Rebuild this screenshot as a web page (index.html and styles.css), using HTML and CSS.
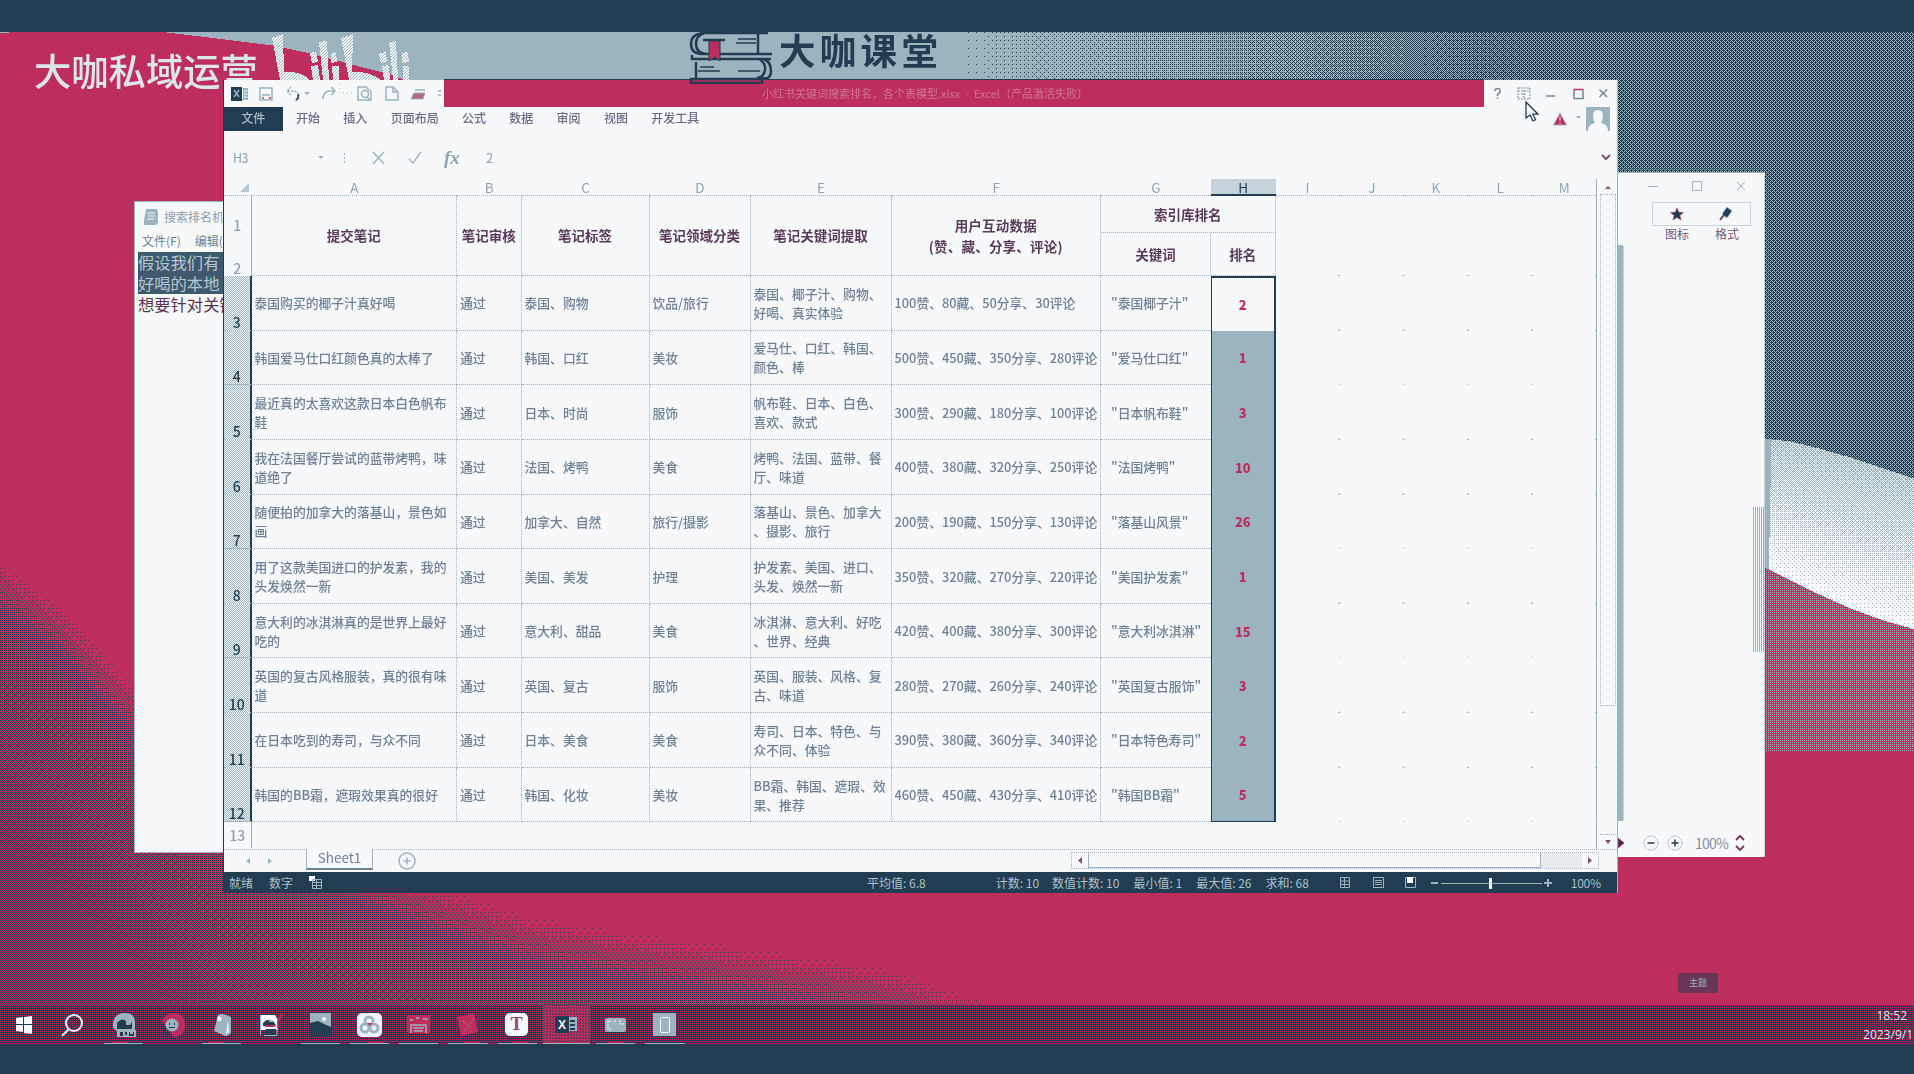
FILE: index.html
```html
<!DOCTYPE html>
<html lang="zh-CN">
<head>
<meta charset="utf-8">
<title>大咖课堂</title>
<link rel="stylesheet" href="styles.css">
</head>
<body>
<div class="desktop">
<canvas class="wallpaper" id="wallpaper" width="1914" height="1074"></canvas>
<svg class="wallpaper" width="1914" height="90" shape-rendering="crispEdges">
  <defs>
    <pattern id="logo-dot" width="3" height="3" patternUnits="userSpaceOnUse"><path class="w" d="M0 0h3v3H0z"/><path class="s" d="M0 0h1v1H0zM2 1h1v1H2zM1 2h1v1H1z"/></pattern>
  </defs>
  <path class="n" d="M0 0H1914V32H0z"/>
  <g fill="url(#logo-dot)">
    <path d="M272 38L283 34L284 72Q301 71 310 80H280z"/>
    <path d="M310 53L316 51L318 62L312 63zM311 66L318 65L320 80H313zM319 42L327 41L329 80H323zM331 53L336 52L337 62L331 63zM332 66H339V80H333z"/>
    <path d="M341 38L353 34L352 72Q370 71 381 80H349z"/>
    <path d="M379 53L386 52L387 62L381 63zM382 66L389 65L390 80H384zM389 42L396 41L398 80H393zM402 53L408 52L409 62L402 63zM403 66H409V80H403z"/>
  </g>
</svg>
<div class="watermark">大咖私域运营</div>

<section class="notepad">
  <div class="np-title"><svg width="16" height="18"><path fill="#9cb3c0" d="M3 1h11l1 3v11l-2 2H1V13z"/><path stroke="#f6f8fa" d="M5 5h7M5 8h7M4 11h7" fill="none"/></svg><span>搜索排名机</span></div>
  <div class="np-menu"><span>文件(F)</span><span>编辑(</span></div>
  <div class="np-text"><p class="sel">假设我们有</p><p class="sel">好喝的本地</p><p>想要针对关键</p></div>
</section>

<section class="side">
  <div class="side-controls"><svg width="146" height="86" fill="none" stroke="#9cb3c0">
    <path d="M30 13.500h10M74.500 8.500h9v9h-9zM119 9l8 8M127 9l-8 8"/>
    <path stroke-dasharray="1 1" d="M34.500 29.500h98v23h-98z"/>
    <path fill="#223c51" stroke="#bd2d5e" stroke-width=".5" d="M59 35l1.800 4.200 4.700.3-3.600 3 1.200 4.500-4.100-2.500-4.100 2.500 1.200-4.500-3.600-3 4.700-.3z"/>
    <path fill="#223c51" d="M109 34l5 4-5 7-5-4z"/><path stroke="#5f3553" stroke-width="2" d="M106 42l-4 5"/></svg></div>
  <div class="side-labels"><span>图标</span><span>格式</span></div>
  <i class="side-edge"></i><i class="side-thumb"></i>
  <div class="side-zoom"><svg width="66" height="26" fill="none"><path fill="#223c51" stroke="#bd2d5e" d="M0 8l6 5-6 5z"/><g stroke="#9cb3c0" stroke-dasharray="2 1"><circle cx="33" cy="13" r="7"/><circle cx="57" cy="13" r="7"/></g><path stroke="#223c51" stroke-width="1.500" d="M29.500 13h7M53.500 13h7M57 9.500v7"/></svg><span>100%</span><svg width="10" height="18" fill="none" stroke="#7b3155" stroke-width="1.800"><path d="M1 6l4-4 4 4M1 12l4 4 4-4"/></svg></div>
</section>

<section class="excel">
  <header class="titlebar">
    <svg class="quick" width="220" height="27" fill="none" stroke="#9cb3c0" stroke-width="1.500">
      <path fill="#9cb3c0" stroke="none" d="M15 8h9v12h-9z"/><path fill="#223c51" stroke="none" d="M7 7h11v14H7z"/><path stroke="#f6f8fa" stroke-width="1" d="M18.500 9v10M20 11h3M20 14h3M20 17h3"/><path d="M10 10l5 7M15 10l-5 7"/>
      <path d="M36 8h12v12H36zM38 15h8"/><path stroke="#bd2d5e" d="M38 18h2M45 18h2"/>
      <path stroke-dasharray="2 1" d="M64 11h4q7 0 7 5t-5 5M67 7l-4 4 4 4"/><path stroke="#223c51" d="M74 14v4l-2 2"/><path fill="#9cb3c0" stroke="none" d="M80 12h6l-3 3z"/>
      <path d="M110 11h-5q-6 1-6 8M107 7l4 4-4 4"/><path stroke-dasharray="1 3" stroke-width="1" d="M116 4v9h12"/>
      <path d="M134 7h8l5 5v8h-13z"/><circle cx="141" cy="14" r="3.500"/><path d="M143 17l4 4"/>
      <path d="M162 7h7l5 5v8h-12zM169 7v5h5"/>
      <path fill="#b46a85" stroke="#9cb3c0" stroke-width="1" d="M190 13h11l-2 6h-12z"/><path d="M191 10h10M214 11h3M214 15h3"/>
    </svg>
    <div class="doc-title">小红书关键词搜索排名，各个表模型.xlsx&nbsp; - &nbsp;Excel（产品激活失败）</div>
    <svg class="win-buttons" width="133" height="27" fill="none" stroke="#738899" stroke-width="1.500"><path d="M11 11q0-2.500 2.500-2.500t2.500 2.500-2.500 3.500v1.500M13.500 17.500v1.500M62 16h9M90 10v8.500h9V10M115.500 9.500l7.500 7.500M123 9.500l-7.500 7.500"/><path stroke="#bd2d5e" d="M89.500 9.500h10"/><path stroke="#9cb3c0" stroke-dasharray="2 1" d="M34 8h12v11H34zM34 11h12M40 10v8M37 14h6"/></svg>
  </header>
  <nav class="ribbon"><span class="file">文件</span><span>开始</span><span>插入</span><span>页面布局</span><span>公式</span><span>数据</span><span>审阅</span><span>视图</span><span>开发工具</span>
    <svg class="account" width="79" height="25"><path fill="#bd2d5e" stroke="#9cb3c0" d="M22 6l6.500 12h-13z"/><path stroke="#f6f8fa" d="M22 9v5M22 15.500v1.500"/><path fill="#9cb3c0" d="M38 9h5l-2.500 3zM48 0h24v24H48z"/><path fill="#f6f8fa" d="M50 24q0-7 7-8-2-3-2-7 0-6 5-6t5 6q0 4-2 7 7 1 7 8z"/></svg>
  </nav>
  <div class="formula"><span class="name">H3</span><svg width="190" height="30" fill="none" stroke="#9cb3c0" stroke-width="1.300"><g transform="translate(58)"><path fill="#9cb3c0" stroke="none" d="M10 13h6l-3 3zM36 10h1v2h-1zM36 14h1v2h-1zM36 18h1v2h-1z"/><path d="M65 9l11 12M76 9L65 21M101 16l4 4 8-11"/></g></svg><em>fx</em><span class="value">2</span><svg class="expand" width="12" height="10"><path fill="none" stroke="#80516f" stroke-width="2" d="M2 2l4 4 4-4"/></svg></div>

  <div class="sheet">
    <div class="grid">
      <div class="corner"><svg width="9" height="9"><path fill="#9cb3c0" opacity=".7" d="M9 0v9H0z"/></svg></div>
      <b>A</b><b>B</b><b>C</b><b>D</b><b>E</b><b>F</b><b>G</b><b class="on">H</b><b>I</b><b>J</b><b>K</b><b>L</b><b>M</b>
      <div class="num r1">1</div><div class="num r2">2</div>
      <div class="head cA">提交笔记</div><div class="head cB">笔记审核</div><div class="head cC">笔记标签</div><div class="head cD">笔记领域分类</div><div class="head cE">笔记关键词提取</div><div class="head cF">用户互动数据<br>(赞、藏、分享、评论)</div><div class="head rank">索引库排名</div><div class="head word">关键词</div><div class="head pos">排名</div><div class="blank top"></div>

      <div class="num on">3</div><div>泰国购买的椰子汁真好喝</div><div>通过</div><div>泰国、购物</div><div>饮品/旅行</div><div>泰国、椰子汁、购物、<br>好喝、真实体验</div><div>100赞、80藏、50分享、30评论</div><div class="key">"泰国椰子汁"</div><div class="score first">2</div><div class="blank"></div>
      <div class="num on">4</div><div>韩国爱马仕口红颜色真的太棒了</div><div>通过</div><div>韩国、口红</div><div>美妆</div><div>爱马仕、口红、韩国、<br>颜色、棒</div><div>500赞、450藏、350分享、280评论</div><div class="key">"爱马仕口红"</div><div class="score">1</div><div class="blank"></div>
      <div class="num on">5</div><div>最近真的太喜欢这款日本白色帆布<br>鞋</div><div>通过</div><div>日本、时尚</div><div>服饰</div><div>帆布鞋、日本、白色、<br>喜欢、款式</div><div>300赞、290藏、180分享、100评论</div><div class="key">"日本帆布鞋"</div><div class="score">3</div><div class="blank"></div>
      <div class="num on">6</div><div>我在法国餐厅尝试的蓝带烤鸭，味<br>道绝了</div><div>通过</div><div>法国、烤鸭</div><div>美食</div><div>烤鸭、法国、蓝带、餐<br>厅、味道</div><div>400赞、380藏、320分享、250评论</div><div class="key">"法国烤鸭"</div><div class="score">10</div><div class="blank"></div>
      <div class="num on">7</div><div>随便拍的加拿大的落基山，景色如<br>画</div><div>通过</div><div>加拿大、自然</div><div>旅行/摄影</div><div>落基山、景色、加拿大<br>、摄影、旅行</div><div>200赞、190藏、150分享、130评论</div><div class="key">"落基山风景"</div><div class="score">26</div><div class="blank"></div>
      <div class="num on">8</div><div>用了这款美国进口的护发素，我的<br>头发焕然一新</div><div>通过</div><div>美国、美发</div><div>护理</div><div>护发素、美国、进口、<br>头发、焕然一新</div><div>350赞、320藏、270分享、220评论</div><div class="key">"美国护发素"</div><div class="score">1</div><div class="blank"></div>
      <div class="num on">9</div><div>意大利的冰淇淋真的是世界上最好<br>吃的</div><div>通过</div><div>意大利、甜品</div><div>美食</div><div>冰淇淋、意大利、好吃<br>、世界、经典</div><div>420赞、400藏、380分享、300评论</div><div class="key">"意大利冰淇淋"</div><div class="score">15</div><div class="blank"></div>
      <div class="num on">10</div><div>英国的复古风格服装，真的很有味<br>道</div><div>通过</div><div>英国、复古</div><div>服饰</div><div>英国、服装、风格、复<br>古、味道</div><div>280赞、270藏、260分享、240评论</div><div class="key">"英国复古服饰"</div><div class="score">3</div><div class="blank"></div>
      <div class="num on">11</div><div>在日本吃到的寿司，与众不同</div><div>通过</div><div>日本、美食</div><div>美食</div><div>寿司、日本、特色、与<br>众不同、体验</div><div>390赞、380藏、360分享、340评论</div><div class="key">"日本特色寿司"</div><div class="score">2</div><div class="blank"></div>
      <div class="num on">12</div><div>韩国的BB霜，遮瑕效果真的很好</div><div>通过</div><div>韩国、化妆</div><div>美妆</div><div>BB霜、韩国、遮瑕、效<br>果、推荐</div><div>460赞、450藏、430分享、410评论</div><div class="key">"韩国BB霜"</div><div class="score last">5</div><div class="blank"></div>
      <div class="num n13">13</div><div class="tail"></div>
    </div>
    <div class="vscroll"><svg width="16" height="15"><path fill="#80516f" d="M5 10l3-3 3 3z"/></svg><i></i><svg width="16" height="15"><path fill="#80516f" d="M5 5h6l-3 4z"/></svg></div>
  </div>

  <div class="tabs">
    <svg width="82" height="23" fill="#9cb3c0"><path d="M26 8v6l-4-3zM44 8v6l4-3z"/></svg>
    <span class="tab">Sheet1</span>
    <svg class="add" width="20" height="20" fill="none" stroke="#9cb3c0" stroke-width="1.500"><circle cx="10" cy="10" r="8"/><path d="M6.500 10h7M10 6.500v7"/></svg>
    <div class="hscroll"><svg width="16" height="15"><path fill="#80516f" d="M10 4v7L6 7.500z"/></svg><i></i><u></u><svg width="16" height="15"><path fill="#80516f" d="M6 4v7l4-3.500z"/></svg></div>
  </div>
  <footer class="status">
    <span>就绪</span><span>数字</span><svg width="14" height="14"><path fill="#f6f8fa" d="M0 0h6v5H0z"/><path fill="none" stroke="#9cb3c0" d="M3.500 3.500h9v9h-9zM4 6.500h8M4 9.500h8M7.500 4v8"/></svg>
    <div class="stats"><span>平均值: 6.8</span><span>计数: 10</span><span>数值计数: 10</span><span>最小值: 1</span><span>最大值: 26</span><span>求和: 68</span></div>
    <svg class="views" width="216" height="20" fill="none" stroke="#9cb3c0"><path d="M1.500 4.500h9v10h-9zM1 8h10M1 11.500h10M5.500 4v10M34.500 4.500h10v10h-10zM36 7.500h7M36 9.500h7M36 11.500h7M66.500 4.500h10v10h-10z"/><path fill="#f6f8fa" stroke="none" d="M68 4h6v6h-6z"/><path stroke-width="2" d="M92 10h7M205 10h8M209 6v8"/><path d="M102 10.500h101"/><path stroke="#f6f8fa" stroke-width="3" d="M151.500 5v11"/></svg>
    <span class="pct">100%</span>
  </footer>
</section>

<div class="brand">
  <svg width="86" height="52" fill="none" stroke="#223c51" stroke-width="2.500">
    <path d="M78 1H15Q3 2 3 12T15 22H84M70 1v20M80 1H17Q8 3 8 12T18 22M4 27H76Q83 30 83 39T74 46M83 27H4V23M71 27Q78 31 77 38T69 46M8 30V46M3 47H74V51H3z"/>
    <path stroke-width="1.500" d="M50 7h18M48 11h20M12 35h14M10 39h22M50 39h22"/><path d="M15 8h22"/><path fill="#bd2d5e" stroke-width="1" d="M21 9h11v20l-5-4-6 4z"/>
  </svg><span>大咖课堂</span>
</div>
<svg class="cursor" width="16" height="22"><path fill="#f6f8fa" stroke="#223c51" stroke-width="1.300" d="M1 1v16l4-3 3 6 2.500-1.200-2.700-5.600H13z"/></svg>
<div class="toast">主题</div>

<div class="taskbar">
  <svg class="apps" width="720" height="39">
    <rect x="543" width="47" height="39" fill="url(#activebg)"/>
    <defs><pattern id="activebg" width="3" height="3" patternUnits="userSpaceOnUse" shape-rendering="crispEdges"><path class="c" d="M0 0h3v3H0z"/><path class="n" d="M0 0h1v1H0zM1 2h1v1H1z"/></pattern></defs>
    <path class="w" d="M16 13l7-1v7h-7zM24 12l8-1v8h-8zM16 20h7v7l-7-1zM24 20h8v9l-8-1z"/>
    <g fill="none" stroke="#f6f8fa" stroke-width="2"><circle cx="74" cy="18" r="8"/><path d="M69 24l-7 7"/></g>
    <path class="s" d="M113 23q-1-15 12-15 11 0 10 12v7h-17z"/><path class="n" d="M117 18q5-6 9-2v4h4l2-3v7h-15z"/><path class="s" d="M117 25h19v7h-19z"/><path class="n" d="M120 27h3v4h-3zM125 27h2v3h-2zM129 27h1v2h3v-2h1v4h-5z"/>
    <path class="c" d="M162 16q4-8 12-8 11 1 11 12t-11 12z"/><path class="n" d="M162 19l7 13-5-3z"/><circle class="s" cx="172" cy="20" r="6.500"/><path class="n" d="M169 18h1v2h-1zM174 18h1v2h-1zM169 22h6v1h-6z"/>
    <path class="s" d="M218 10q4-3 13 2v16q-2 3-6 3l-11-5z"/><path class="w" d="M218 11l4 2-2 4-3-2zM228 15l1 12-3 2z"/><path fill="none" stroke="#bd2d5e" d="M211 25l6 6"/>
    <path class="w" d="M260 10h15l3 5v10h-18z"/><path class="n" d="M263 18q5-6 11-1l2 4h-13zM266 24h10v5h-10z"/><path fill="none" stroke="#9cb3c0" d="M260.500 10v20M264 30.500h13V24"/><path fill="none" stroke="#bd2d5e" stroke-width="2" d="M282 9l-4 7v7M265 21h10"/><path class="s" d="M269 15h4v2h-4z"/>
    <path class="s" d="M310 8h21v22h-21z"/><path class="n" d="M310 18l8-2 6 3 7 3v10h-21z"/><circle class="w" cx="324" cy="14" r="2"/>
    <rect class="w" x="357" y="8" width="25" height="24" rx="5"/><g fill="none" stroke="#9cb3c0" stroke-width="3"><circle cx="369" cy="16" r="4"/><circle cx="365" cy="23" r="4"/><circle cx="374" cy="23" r="4"/></g><path class="c" d="M367 18h5l-2 3z"/>
    <path class="c" d="M407 10h23v18h-23z"/><path fill="none" stroke="#9cb3c0" stroke-width="1.500" d="M411 28v-8h15v8M413 23h11M414 26h9M410 15h3M416 13h3M423 14h5"/>
    <path class="c" d="M457 12l17-4 4 19-17 4z"/><path fill="none" stroke="#9cb3c0" stroke-dasharray="1 2" d="M474 13l-10 14M463 16l9 8"/>
    <rect class="w" x="505" y="8" width="23" height="23" rx="5"/><text class="tee" x="516.500" y="25" text-anchor="middle">T</text>
    <path class="s" d="M568 12h9v14h-9z"/><path class="n" d="M555 11h14v17h-14zM570 15h5v2h-5zM570 19h5v2h-5zM570 23h5v2h-5z"/><text class="ex" x="562" y="24" text-anchor="middle">X</text>
    <rect class="s" x="605" y="13" width="21" height="14" rx="2"/><path fill="none" stroke="#f6f8fa" d="M611 16h-3v8h3M614 16h2M620 15v4h4" stroke-dasharray="2 1"/>
    <path class="s" d="M653 8h23v23h-23z"/><rect x="660.500" y="12.500" width="9" height="15" rx="1" fill="none" stroke="#f6f8fa"/>
    <path stroke="#9cb3c0" d="M104 38.500h39M202 38.500h39M301 38.500h39M350 38.500h39M399 38.500h39M448 38.500h40M498 38.500h39M543 38.500h47M596 38.500h39M645 38.500h40"/>
    <path stroke="#bd2d5e" d="M112 37.500h16M208 37.500h16M368 37.500h16M464 37.500h16M512 37.500h16M608 37.500h16"/>
  </svg>
  <div class="clock"><span>18:52</span><span>2023/9/1</span></div>
</div>
<div class="bottom"></div>
</div>
<script src="wallpaper.js"></script>
</body>
</html>
```
FILE: styles.css
```css
:root { --navy: #223c51; --rose: #bd2d5e; --steel: #9cb3c0; --paper: #f6f8fa; --ink: #6f8195; --bold: #593b59; }
* { box-sizing: border-box; }
body { margin: 0; font-family: "Noto Sans CJK SC", sans-serif; color: var(--ink); }
p { margin: 0; }
.n { fill: var(--navy); }
.s { fill: var(--steel); }
.w { fill: var(--paper); }
.c { fill: var(--rose); }
.desktop { position: relative; width: 1914px; height: 1074px; overflow: hidden; background: var(--rose); white-space: nowrap; }
.wallpaper { position: absolute; left: 0; top: 0; }
.watermark { position: absolute; left: 34px; top: 44px; font-size: 37.300px; line-height: 52px; font-weight: 500; color: #dce5ea; }

/* note window behind the workbook */
.notepad { position: absolute; left: 134px; top: 201px; width: 92px; height: 652px; overflow: hidden; background: var(--paper); border: 1px solid var(--steel); padding: 6px 0 0 3px; font-size: 12px; }
.np-title { display: flex; gap: 5px; padding-left: 5px; line-height: 18px; color: #8ba0b0; }
.np-title svg { flex: none; }
.np-menu { display: flex; gap: 14px; padding: 5px 0 0 4px; line-height: 20px; }
.np-text { padding-top: 1px; font-size: 16.300px; color: #573453; }
.np-text p { height: 21px; line-height: 20px; }
.np-text .sel { background: #3f596d; color: #b5c7d1; }

/* document window to the right */
.side { position: absolute; left: 1618px; top: 172px; width: 147px; height: 685px; background: var(--paper); border-top: 1px solid var(--steel); border-right: 1px dotted var(--steel); overflow: hidden; }
.side-controls { height: 52px; }
.side-controls svg { display: block; }
.side-labels { position: relative; display: flex; gap: 26px; padding-left: 47px; font-size: 12px; line-height: 18px; color: #745b76; }
.side-edge { position: absolute; left: 0; top: 72px; width: 6px; height: 576px; background: var(--steel); border-right: 1px dotted var(--paper); }
.side-thumb { position: absolute; right: 0; top: 334px; width: 11px; height: 145px; background: repeating-linear-gradient(90deg, var(--steel) 0 1px, var(--paper) 1px 2px); }
.side-zoom { position: absolute; left: 0; right: 0; bottom: 0; height: 28px; display: flex; align-items: center; font-size: 14px; letter-spacing: -.8px; color: #8a8fa3; }
.side-zoom span { margin: 0 7px 0 11px; }

/* workbook */
.excel { position: absolute; left: 223px; top: 80px; width: 1395px; height: 813px; display: flex; flex-direction: column; background: var(--paper); border-left: 1px solid var(--navy); border-right: 1px solid var(--steel); }
.titlebar { display: flex; height: 27px; flex: none; }
.titlebar svg { flex: none; }
.doc-title { flex: 1; background: var(--rose); text-align: center; font-size: 11px; line-height: 26px; color: #cf7593; box-shadow: 0 -1px var(--navy); padding-right: 78px; }
.ribbon { display: flex; height: 25px; flex: none; gap: 23.300px; font-size: 12px; line-height: 21px; color: #6b6c85; font-weight: 500; }
.file { width: 58.500px; height: 24px; margin-right: -9.800px; background: var(--navy); color: #a9bdc9; text-align: center; }
.account { margin-left: auto; }
.formula { display: flex; align-items: center; height: 47px; flex: none; padding: 4px 5px 0 9px; font-size: 14px; color: #8fa4b2; }
.formula .name { width: 17px; font-size: 12.500px; letter-spacing: -.5px; }
.formula em { font: italic bold 19px "Liberation Serif", serif; margin-left: 4px; width: 42px; }
.formula .value { font-size: 13px; }
.expand { margin-left: auto; }
.sheet { display: flex; height: 670px; flex: none; }
.grid { display: grid; width: 1373px; overflow: hidden; border-right: 1px solid var(--steel); grid-template-columns: 27.500px 205.500px 64.500px 128px 101px 141px 209.500px 110px 64.500px repeat(5, 64.200px); grid-template-rows: 17px 37px 43px repeat(10, 54.650px) 26px; font-size: 12.800px; line-height: 19px; font-weight: 500; }
.grid > div { border-right: 1px dotted var(--steel); border-bottom: 1px dotted var(--steel); padding: 0 3px; display: flex; align-items: center; }
.grid > b { font-size: 13.500px; font-weight: 400; line-height: 16px; text-align: center; border-bottom: 1px dotted var(--steel); color: #8fa4b2; }
.grid > b.on { background: #c6d3db; color: var(--navy); border-bottom: 2px solid var(--navy); }
.grid > .corner { border-right: 0; justify-content: flex-end; }
.grid > .num { font-size: 14px; line-height: 16px; padding: 0; justify-content: center; align-items: flex-end; border-right: 1px solid var(--steel); color: #8fa4b2; }
.grid > .r1, .grid > .r2 { border-bottom: 0; grid-column: 1; }
.grid > .r1 { grid-row: 2; }
.grid > .r2 { grid-row: 3; }
.grid > .num.on { background: repeating-conic-gradient(var(--steel) 0 25%, var(--paper) 0 50%) 0 0 / 2px 2px; border-right: 2px solid var(--navy); color: var(--navy); }
.grid > .n13 { border-bottom: 0; padding-bottom: 5px; }
.grid > .head { font-size: 13.500px; line-height: 21px; font-weight: 700; color: var(--bold); justify-content: center; text-align: center; padding: 0; }
.cA, .cB, .cC, .cD, .cE, .cF { grid-row: 2 / 4; }
.cA { grid-column: 2; } .cB { grid-column: 3; } .cC { grid-column: 4; } .cD { grid-column: 5; } .cE { grid-column: 6; } .cF { grid-column: 7; letter-spacing: .2px; }
.rank { grid-row: 2; grid-column: 8 / 10; }
.word { grid-row: 3; grid-column: 8; }
.pos { grid-row: 3; grid-column: 9; }
.grid > .key { padding-left: 10px; border-right: 0; }
.grid > .score { justify-content: center; background: var(--steel); color: var(--rose); font-weight: 900; border-left: 1px solid var(--navy); border-right: 2px solid var(--navy); border-bottom: 0; }
.grid > .score.first { background: var(--paper); border-top: 2px solid var(--navy); }
.grid > .score.last { border-bottom: 1px solid var(--navy); }
/* empty cells show only the grid crossings */
.grid > .blank { grid-column: 10 / 15; border: 0; background: radial-gradient(circle at 63.500px 54px, var(--steel) .8px, transparent 1px) 0 0 / 64.200px 54.650px; }
.grid > .blank.top { grid-row: 2 / 4; background: radial-gradient(circle at 63.500px 79.500px, var(--steel) .8px, transparent 1px) 0 0 / 64.200px 80px; }
.grid > .tail { grid-column: 2 / 15; border: 0; }
.vscroll { display: flex; flex-direction: column; width: 19px; padding-left: 3px; }
.vscroll i { height: 512px; width: 16px; border: 1px dotted var(--steel); }
.vscroll svg:last-child { margin-top: auto; border-top: 1px dotted var(--steel); }
.tabs { display: flex; height: 23px; flex: none; border-top: 1px dotted var(--steel); }
.tab { width: 67px; height: 21px; margin-top: -1px; background: var(--paper); border: 1px solid var(--steel); border-top: 0; border-bottom: 2px solid #6c8191; text-align: center; font-size: 13.500px; line-height: 16px; }
.add { margin: 1px 0 0 24px; }
.hscroll { display: flex; height: 17px; margin: 2px 18px 0 auto; border: 1px dotted var(--steel); }
.hscroll i { width: 453px; border: solid var(--steel); border-width: 0 1px 1px; }
.hscroll u { width: 41px; background: #e6ecf0; }
.status { display: flex; align-items: center; gap: 16px; height: 21px; flex: none; padding-left: 5px; background: var(--navy); color: #adc0cb; font-size: 12px; line-height: 18px; }
.stats { display: flex; gap: 14px; margin-left: 528px; }
.stats span:first-child { margin-right: 56px; }
.stats span:nth-child(2) { margin-right: -1px; }
.views { margin-left: 14px; }
.pct { letter-spacing: -.3px; }

.brand { position: absolute; left: 688px; top: 32px; display: flex; gap: 5px; font-size: 36.500px; line-height: 36px; letter-spacing: 4.300px; font-weight: 700; color: var(--navy); }
.cursor { position: absolute; left: 1525px; top: 101px; }
.toast { position: absolute; left: 1678px; top: 973px; width: 40px; height: 20px; background: #6b3557; color: var(--steel); font-size: 9px; line-height: 20px; text-align: center; border-radius: 2px; }
.taskbar { position: absolute; left: 0; top: 1005px; width: 1914px; height: 39px; display: flex; justify-content: space-between; background: conic-gradient(transparent 75%, var(--rose) 0) 0 0 / 2px 2px, var(--navy); }
.tee { font: bold 18px "Liberation Serif", serif; fill: #80516f; }
.ex { font: bold 12px "Liberation Sans", sans-serif; fill: var(--paper); }
.clock { display: flex; flex-direction: column; align-items: flex-end; padding: 1px 1px 0 0; font: 12px/19px "Open Sans", sans-serif; color: #e2e9ee; }
.clock span:first-child { margin-right: 6px; }
.bottom { position: absolute; left: 0; top: 1044px; width: 1914px; height: 30px; background: var(--navy); }
```
FILE: wallpaper.js
```js
// Paints the abstract wave wallpaper in four colours with ordered dithering.
const NAVY = [34, 60, 81], ROSE = [189, 45, 94], STEEL = [156, 179, 192], PAPER = [246, 248, 250];
const BAYER = [];
for (let y = 0; y < 8; y++) {
  for (let x = 0; x < 8; x++) {
    let v = 0;
    for (let bit = 0; bit < 3; bit++) {
      const bx = (x >> bit) & 1, by = (y >> bit) & 1;
      v = v * 4 + ((bx ^ by) * 2 + by);
    }
    BAYER.push((v + 0.5) / 64);
  }
}
const clamp = (v, lo, hi) => Math.min(hi, Math.max(lo, v));

function curve(points) {
  return x => {
    for (let i = 1; i < points.length; i++) {
      const [x0, y0] = points[i - 1], [x1, y1] = points[i];
      if (x <= x1) return y0 + (y1 - y0) * (x - x0) / (x1 - x0);
    }
    return Infinity;
  };
}
const crest = curve([[0, 33], [18, 31], [158, 31], [200, 36], [272, 45], [310, 53], [355, 65], [390, 74], [415, 84]]);
const shade = curve([[0, 560], [60, 603], [134, 685], [224, 800], [440, 885], [530, 915], [640, 932], [765, 948], [895, 968], [1000, 1006]]);
const bandTop = curve([[1600, 430], [1764, 438], [1790, 441], [1818, 448], [1850, 457], [1880, 467], [1914, 478]]);
const bandEnd = curve([[1600, 500], [1764, 567], [1810, 590], [1850, 608], [1880, 619], [1914, 629]]);

function tone(x, y) {
  if (x > 1610 && y >= bandTop(x)) {
    if (y < bandEnd(x)) {
      if (x < 1771 - (y - 438) / 50) return [STEEL, PAPER, 0];
      const t = (y - bandTop(x)) / (bandEnd(x) - bandTop(x));
      return [STEEL, PAPER, 0.35 + 0.62 * t];
    }
    return [ROSE, STEEL, y < 752 ? 0.27 : 0];
  }
  const night = x > 1500 && y < 500;
  if (night || (y < 84 && (x > 412 || y < crest(x)))) {
    return [STEEL, NAVY, clamp((x - 960) / 900, 0, 0.62)];
  }
  const depth = y - shade(x);
  if (depth < 0) return [ROSE, NAVY, 0];
  return [ROSE, NAVY, 0.28 * clamp(depth / 55, 0, 1) + 0.22 * clamp((depth - 55) / 240, 0, 1)];
}

const canvas = document.getElementById('wallpaper');
const ctx = canvas.getContext('2d');
const image = ctx.createImageData(canvas.width, canvas.height);
for (let y = 0, p = 0; y < canvas.height; y++) {
  for (let x = 0; x < canvas.width; x++, p += 4) {
    const [base, ink, level] = tone(x, y);
    const c = level > BAYER[(y & 7) * 8 + (x & 7)] ? ink : base;
    image.data[p] = c[0];
    image.data[p + 1] = c[1];
    image.data[p + 2] = c[2];
    image.data[p + 3] = 255;
  }
}
ctx.putImageData(image, 0, 0);
```
